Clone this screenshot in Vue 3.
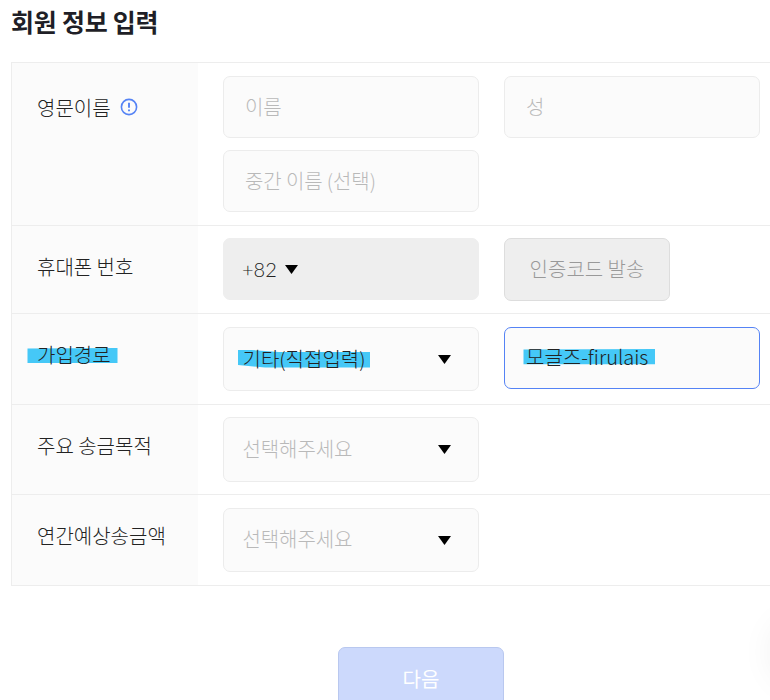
<script setup>
const purposes = [
  { id: 'purpose', label: '주요 송금목적' },
  { id: 'amount', label: '연간예상송금액' }
]
</script>

<template>
  <main class="page">
    <h1 class="title">회원 정보 입력</h1>
    <section class="table">
      <div class="row row-name">
        <div class="label">
          <span class="label-text">영문이름</span>
          <svg class="info" width="18" height="18" viewBox="0 0 18 18">
            <circle cx="9" cy="9" r="7.6" fill="none" stroke="#5583f5" stroke-width="1.6" />
            <path d="M9 4.700v5M9 11.400v1.900" fill="none" stroke="#5583f5" stroke-width="1.900" />
          </svg>
        </div>
        <div class="fields">
          <div class="box input hint"><span>이름</span></div>
          <div class="box input hint"><span>성</span></div>
          <div class="box input hint"><span>중간 이름 (선택)</span></div>
        </div>
      </div>

      <div class="row row-phone">
        <div class="label"><span class="label-text">휴대폰 번호</span></div>
        <div class="fields">
          <div class="box code">
            <span class="code-text">+82</span>
            <svg class="arrow" width="13" height="9" viewBox="0 0 13 9"><path d="M0 0h13L6.5 9z" /></svg>
          </div>
          <button class="send">인증코드 발송</button>
        </div>
      </div>

      <div class="row row-route">
        <div class="label">
          <span class="label-text marked">
            <svg class="mark mark-label" width="91" height="16" viewBox="0 0 91 16"><path d="M.5 .4L90.500 0v15H.5z" /></svg>
            <span class="over">가입경로</span>
          </span>
        </div>
        <div class="fields">
          <div class="box select chosen">
            <span class="marked">
              <svg class="mark mark-select" width="132" height="18" viewBox="0 0 132 18"><path d="M0 0l13 0 28 2h91v15.500H27L0 15z" /></svg>
              <span class="over">기타(직접입력)</span>
            </span>
            <svg class="arrow" width="13" height="9" viewBox="0 0 13 9"><path d="M0 0h13L6.500 9z" /></svg>
          </div>
          <div class="box input focused">
            <span class="marked">
              <svg class="mark mark-input" width="132" height="16" viewBox="0 0 132 16"><path d="M.5 .5L132 0v15.300H.5z" /></svg>
              <span class="over">모글즈-firulais</span>
            </span>
          </div>
        </div>
      </div>

      <div v-for="p in purposes" :key="p.id" class="row" :class="`row-${p.id}`">
        <div class="label"><span class="label-text">{{ p.label }}</span></div>
        <div class="fields">
          <div class="box select hint">
            <span>선택해주세요</span>
            <svg class="arrow" width="13" height="9" viewBox="0 0 13 9"><path d="M0 0h13L6.500 9z" /></svg>
          </div>
        </div>
      </div>
    </section>
    <div class="actions"><button class="next">다음</button></div>
    <div class="glow"></div>
  </main>
</template>

<style>
body {
  background: #fff;
  overflow: hidden;
}
</style>

<style scoped>
.page {
  position: relative;
  box-sizing: border-box;
  width: 770px;
  height: 700px;
  padding-left: 11px;
  overflow: hidden;
  font-family: "Noto Sans CJK KR", sans-serif;
  font-size: 20px;
  font-weight: 300;
  line-height: 30px;
  color: #222;
  white-space: nowrap;
}
.title {
  height: 62px;
  margin: 0;
  padding-top: 3px;
  box-sizing: border-box;
  font-size: 25px;
  font-weight: 700;
  line-height: 36px;
  letter-spacing: -0.25px;
  color: #1f1f27;
}
.table {
  border-top: 1px solid #ededed;
  border-left: 1px solid #ededed;
}
.row {
  display: flex;
  border-bottom: 1px solid #ededed;
}
.row-name { height: 162px; }
.row-phone { height: 87px; }
.row-route { height: 90px; }
.row-purpose { height: 89px; }
.row-amount { height: 90px; }
.label {
  box-sizing: border-box;
  flex: 0 0 186px;
  display: flex;
  align-items: flex-start;
  gap: 9px;
  padding: 26px 0 0 25px;
  background: #fbfbfb;
}
.row-name .label { padding-top: 30px; }
.info { margin-top: 5px; }
.fields {
  flex: 1;
  display: flex;
  flex-wrap: wrap;
  align-items: flex-start;
  align-content: flex-start;
  gap: 12px 25px;
  padding: 13px 0 0 25px;
}
.row-phone .fields,
.row-purpose .fields { padding-top: 12px; }
.box {
  box-sizing: border-box;
  width: 256px;
  height: 62px;
  display: flex;
  align-items: center;
  border: 1px solid #ececec;
  border-radius: 7px;
  background: #fbfbfb;
}
.input { padding: 0 21px; }
.input.focused { padding-bottom: 2px; }
.hint {
  color: #b9b9b9;
  letter-spacing: -0.1px;
}
.arrow {
  display: block;
  fill: #000;
}
.code {
  gap: 8px;
  padding-left: 18px;
  border-color: #eee;
  background: #eee;
}
.code-text {
  font-family: Lato, sans-serif;
}
.send {
  box-sizing: border-box;
  width: 166px;
  height: 63px;
  padding: 0 0 1px;
  border: 1px solid #ddd;
  border-radius: 7px;
  background: #eee;
  font: inherit;
  color: #999;
}
.select {
  height: 64px;
  justify-content: space-between;
  padding: 0 27.500px 0 18.500px;
}
.select.hint > span { margin-top: -2px; }
.row-purpose .select { height: 65px; }
.focused { border-color: #5583f5; }
.marked { position: relative; }
.over { position: relative; }
.mark {
  position: absolute;
  fill: #45c8f7;
}
.mark-label { left: -10px; top: 8px; }
.mark-select { left: -5px; top: 6px; }
.mark-input { left: -3px; top: 7px; }
.actions {
  display: flex;
  padding: 61px 0 0 327px;
}
.next {
  box-sizing: border-box;
  width: 166px;
  height: 63px;
  padding: 0;
  border: 1px solid #b9c8ef;
  border-radius: 7px;
  background: #ccd9fc;
  font: inherit;
  font-weight: 400;
  color: #fff;
}
.glow {
  position: absolute;
  right: -64px;
  top: 622px;
  width: 60px;
  height: 60px;
  border-radius: 50%;
  box-shadow: 0 0 36px rgba(0, 0, 0, 0.08);
}
</style>
